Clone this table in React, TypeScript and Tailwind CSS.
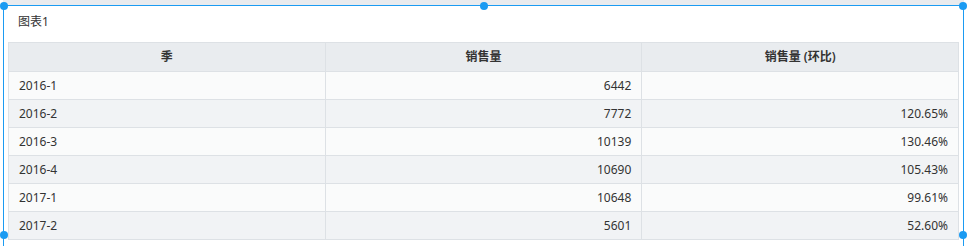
import React from "react";

const rows = [
    { q: "2016-1", v: "6442", r: "" },
    { q: "2016-2", v: "7772", r: "120.65%" },
    { q: "2016-3", v: "10139", r: "130.46%" },
    { q: "2016-4", v: "10690", r: "105.43%" },
    { q: "2017-1", v: "10648", r: "99.61%" },
    { q: "2017-2", v: "5601", r: "52.60%" },
];

// resize handles sit over the widget frame
const Handle: React.FC<{ className: string }> = ({ className }) => (
    <span className={`absolute w-[8px] h-[8px] rounded-full bg-[#1b9bf2] -translate-x-1/2 -translate-y-1/2 ${className}`} />
);

const App: React.FC = () => {
    return (
        <div
            className="flex flex-col w-[967px] h-[246px] overflow-hidden bg-white px-[3px] text-[12px] text-[#333]"
            style={{ fontFamily: '"Noto Sans", "Noto Sans CJK SC", sans-serif' }}
        >
            <div className="h-[5px] shrink-0 bg-[#e9ebee]" />
            <div className="relative flex flex-col shrink-0 h-[400px] border border-b-0 border-[#1b9bf2] bg-white">
                <div className="flex items-start h-[36px] pl-[14px] pt-[7px] leading-[18px]">图表1</div>
                <div className="flex px-[4px]">
                    <table className="w-full table-fixed border-collapse">
                        <thead>
                            <tr className="h-[29px] bg-[#e9ecef]">
                                <th className="border border-[#dde1e5] font-semibold">季</th>
                                <th className="border border-[#dde1e5] font-semibold">销售量</th>
                                <th className="border border-[#dde1e5] font-semibold">销售量 (环比)</th>
                            </tr>
                        </thead>
                        <tbody>
                            {rows.map((row, i) => (
                                <tr key={row.q} className={`h-[28px] ${i % 2 === 0 ? "bg-[#fafbfb]" : "bg-[#f1f3f5]"}`}>
                                    <td className="border border-[#dde1e5] px-[10px] text-left">{row.q}</td>
                                    <td className="border border-[#dde1e5] px-[10px] text-right">{row.v}</td>
                                    <td className="border border-[#dde1e5] px-[10px] text-right">{row.r}</td>
                                </tr>
                            ))}
                        </tbody>
                    </table>
                </div>
                <Handle className="left-[-0.5px] top-0" />
                <Handle className="left-1/2 top-0" />
                <Handle className="left-full top-0" />
                <Handle className="left-[-0.5px] top-[229px]" />
                <Handle className="left-full top-[229px]" />
            </div>
        </div>
    );
};

export default App;
